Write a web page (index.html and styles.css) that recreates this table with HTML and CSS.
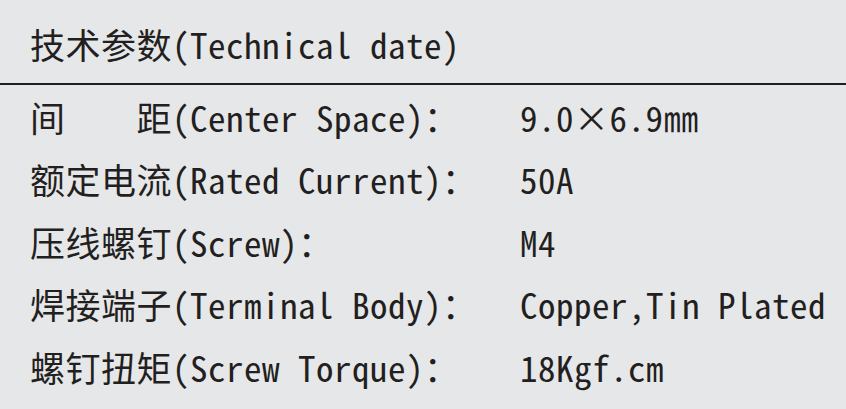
FILE: index.html
```html
<!DOCTYPE html>
<html lang="zh">
<head>
<meta charset="utf-8">
<link rel="stylesheet" href="styles.css">
</head>
<body>
<div class="sheet">
  <div class="title">技术参数(Technical date)</div>
  <div class="specs">
    <div class="label">间　　距(Center Space)：</div><div class="value">9.0×6.9㎜</div>
    <div class="label">额定电流(Rated Current)：</div><div class="value">50A</div>
    <div class="label">压线螺钉(Screw)：</div><div class="value">M4</div>
    <div class="label">焊接端子(Terminal Body)：</div><div class="value">Copper,Tin Plated</div>
    <div class="label">螺钉扭矩(Screw Torque)：</div><div class="value">18Kgf.cm</div>
  </div>
</div>
</body>
</html>
```
FILE: styles.css
```css
html, body {
  margin: 0;
  padding: 0;
  background: #e6e7e9;
}
.sheet {
  width: 846px;
  height: 409px;
  overflow: hidden;
  color: #231f20;
  font-family: "Noto Sans Mono CJK JP", "Noto Sans CJK JP", monospace;
  font-size: 35px;
  letter-spacing: 0.5px;
}
.title {
  height: 85px;
  box-sizing: border-box;
  padding: 3px 0 0 30px;
  display: flex;
  align-items: center;
  border-bottom: 2px solid #231f20;
  white-space: nowrap;
}
.specs {
  display: grid;
  grid-template-columns: 490px auto;
  grid-auto-rows: 62.5px;
  padding: 0 0 0 30px;
  white-space: nowrap;
}
.label, .value {
  display: flex;
  align-items: center;
}
```
